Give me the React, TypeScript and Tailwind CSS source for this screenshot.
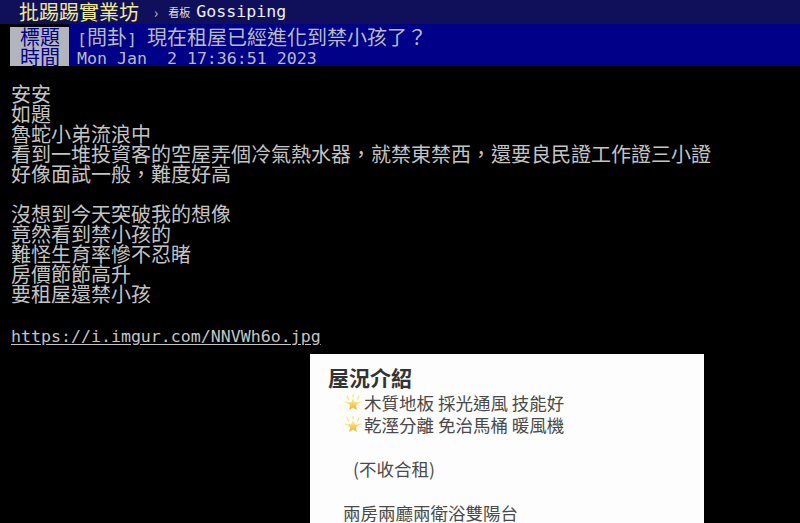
import React from 'react';

const cjk = { fontFamily: '"Noto Sans CJK TC", "Noto Sans CJK SC", sans-serif' };
const mono = { fontFamily: '"DejaVu Sans Mono", "Liberation Mono", monospace' };

// half-width text: 10px advance, like the terminal grid
const Half: React.FC<{ children: React.ReactNode; className?: string }> = ({ children, className = '' }) => (
  <span className={`text-[16.6px] leading-none whitespace-pre ${className}`} style={mono}>
    {children}
  </span>
);

const GlowStar: React.FC = () => (
  <svg width="18" height="18" viewBox="0 0 18 18" className="shrink-0">
    <defs>
      <linearGradient id="starFill" x1="0" y1="0" x2="0" y2="1">
        <stop offset="0" stopColor="#fff3a0" />
        <stop offset="1" stopColor="#f0b020" />
      </linearGradient>
    </defs>
    <path d="M3 2 L4.5 5 M9 0.5 L9 3 M15 2 L13.5 5 M1 8 L3.5 8.5 M17 8 L14.5 8.5" stroke="#f8e27a" strokeWidth="1.2" strokeLinecap="round" />
    <path d="M9 4 L10.8 8.2 L15.2 8.6 L11.9 11.5 L12.9 16 L9 13.6 L5.1 16 L6.1 11.5 L2.8 8.6 L7.2 8.2 Z" fill="url(#starFill)" />
  </svg>
);

const lines1 = ['安安', '如題', '魯蛇小弟流浪中'];
const lines2 = ['沒想到今天突破我的想像', '竟然看到禁小孩的', '難怪生育率慘不忍睹', '房價節節高升', '要租屋還禁小孩'];

const App: React.FC = () => {
  return (
    <div className="h-[523px] w-full overflow-hidden bg-black text-[20px]" style={cjk}>
      {/* top bar */}
      <div className="flex h-6 items-center bg-[#10105a] pl-[19px]">
        <span className="text-[20px] leading-6 text-[#f2ec8a]">批踢踢實業坊</span>
        <span className="ml-[15px] text-[14px] text-[#cccccc]">›</span>
        <span className="ml-[10px] text-[11px] text-[#dddddd]">看板</span>
        <Half className="ml-[6px] text-[#eeeeee]">Gossiping</Half>
      </div>

      {/* meta lines */}
      <div className="flex h-[42px]">
        <div className="w-[10px]" />
        <div className="mt-[3px] w-[59px] bg-[#b4b4bc] pl-[10px] leading-[19.5px] text-[#000088]">
          <div>標題</div>
          <div>時間</div>
        </div>
        <div className="flex-1 bg-[#000088] pl-2 pt-[3px] leading-[19.5px] text-[#bbbbbb]">
          <div className="whitespace-pre">
            <Half>[</Half>問卦<Half>] </Half>現在租屋已經進化到禁小孩了？
          </div>
          <div className="flex h-[19.5px] items-start pt-[2px]">
            <Half>Mon Jan  2 17:36:51 2023</Half>
          </div>
        </div>
      </div>

      {/* article body */}
      <div className="pl-[11px] pt-[18px] leading-5 text-[#c4c4c4]">
        {lines1.map((l) => (
          <div key={l}>{l}</div>
        ))}
        <div>看到一堆投資客的空屋弄個冷氣熱水器，就禁東禁西，還要良民證工作證三小證</div>
        <div>好像面試一般，難度好高</div>
        <div className="h-5" />
        {lines2.map((l) => (
          <div key={l}>{l}</div>
        ))}
        <div className="h-5" />
        <div className="h-5">
          <Half className="underline underline-offset-2 text-[#c4c4c4]">https://i.imgur.com/NNVWh6o.jpg</Half>
        </div>

        {/* embedded picture */}
        <div className="ml-[299px] mt-[10px] h-[200px] w-[394px] bg-[#fdfdfd] pt-3 text-[#4a4a4a]">
          <div className="mb-1 pl-[18px] text-[21px] font-bold leading-[22px] text-[#333333]">屋況介紹</div>
          <div className="text-[17.5px] leading-[22px]">
            <div className="flex items-center gap-[2px] pl-[34px]">
              <GlowStar />
              <span>木質地板 採光通風 技能好</span>
            </div>
            <div className="flex items-center gap-[2px] pl-[34px]">
              <GlowStar />
              <span>乾溼分離 免治馬桶 暖風機</span>
            </div>
            <div className="h-[22px]" />
            <div className="pl-[43px]">(不收合租)</div>
            <div className="h-[22px]" />
            <div className="pl-[33px]">兩房兩廳兩衛浴雙陽台</div>
          </div>
        </div>
      </div>
    </div>
  );
};

export default App;
